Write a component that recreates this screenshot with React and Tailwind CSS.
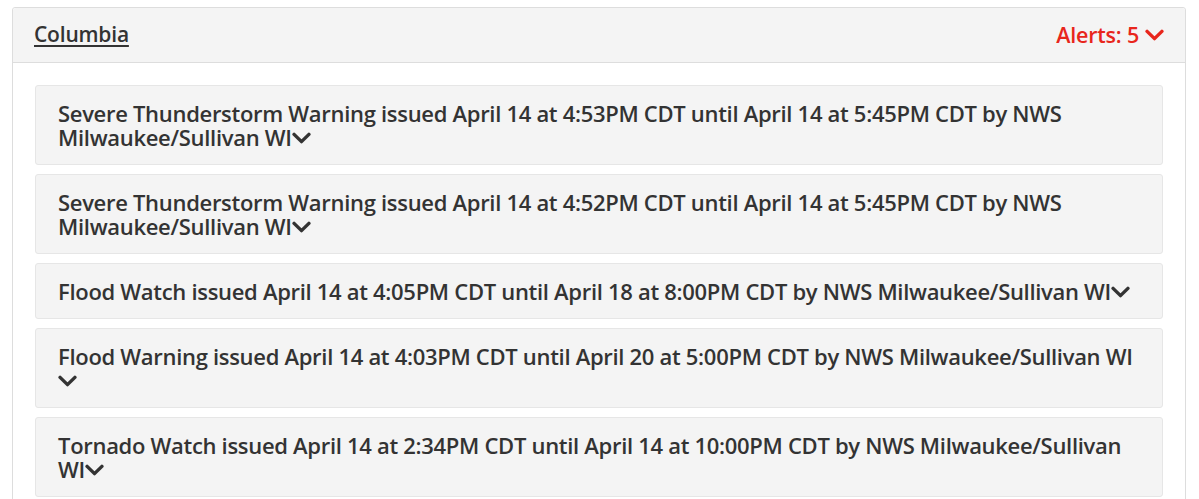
import { useState } from 'react';

const alerts = [
    'Severe Thunderstorm Warning issued April 14 at 4:53PM CDT until April 14 at 5:45PM CDT by NWS Milwaukee/Sullivan WI',
    'Severe Thunderstorm Warning issued April 14 at 4:52PM CDT until April 14 at 5:45PM CDT by NWS Milwaukee/Sullivan WI',
    'Flood Watch issued April 14 at 4:05PM CDT until April 18 at 8:00PM CDT by NWS Milwaukee/Sullivan WI',
    'Flood Warning issued April 14 at 4:03PM CDT until April 20 at 5:00PM CDT by NWS Milwaukee/Sullivan WI',
    'Tornado Watch issued April 14 at 2:34PM CDT until April 14 at 10:00PM CDT by NWS Milwaukee/Sullivan WI',
];

function Chevron({ className }) {
    return (
        <svg viewBox="0 0 20 12" className={className} fill="none" stroke="currentColor" strokeWidth="3.6" strokeLinecap="round" strokeLinejoin="round">
            <polyline points="2.2,2.2 10,9.8 17.8,2.2" />
        </svg>
    );
}

export default function App() {
    const [open, setOpen] = useState(true);

    return (
        <div className="min-h-screen bg-white pt-[7px] px-3 font-['Open_Sans',sans-serif]">
            <div className="w-[1174px] border border-[#dddddd] rounded-[3px] bg-white">
                {/* Header */}
                <div className="flex items-center justify-between h-[55px] px-[21px] bg-[#f4f4f4] border-b border-[#dddddd] rounded-t-[3px]">
                    <a href="#" className="text-[21px] font-semibold text-[#333333] underline underline-offset-[3px] decoration-[1.5px] tracking-[-0.2px]">
                        Columbia
                    </a>
                    <button
                        onClick={() => setOpen(!open)}
                        className="flex items-center gap-[6px] text-[21.5px] font-semibold text-[#e8261c] tracking-[-0.2px]"
                    >
                        Alerts: 5
                        <Chevron className="w-[19px] h-[12px]" />
                    </button>
                </div>

                {/* Alert list */}
                {open && (
                    <div className="flex flex-col gap-[9px] p-[22px]">
                        {alerts.map((alert) => (
                            <div
                                key={alert}
                                className="bg-[#f4f4f4] border border-[#e6e6e6] rounded-[3px] px-[22px] py-[15px]"
                            >
                                <p className="text-[22px] leading-[24px] font-semibold text-[#333333] tracking-[-0.3px]">
                                    {alert}
                                    <Chevron className="inline-block w-[19px] h-[12px] align-[2px]" />
                                </p>
                            </div>
                        ))}
                    </div>
                )}
            </div>
        </div>
    );
}
